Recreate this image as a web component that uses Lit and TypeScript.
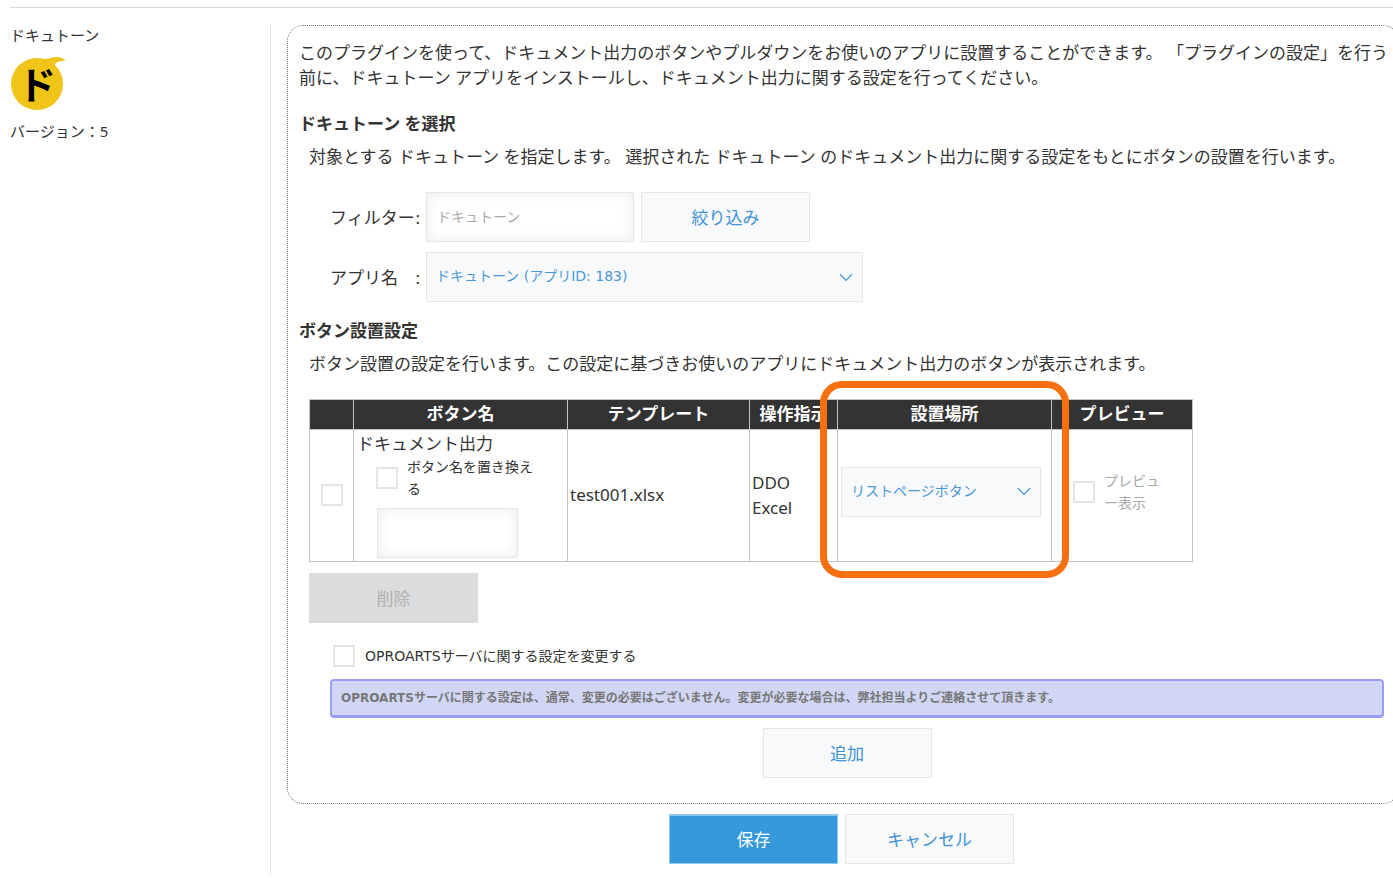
import { LitElement, html, css } from "lit";
import { customElement } from "lit/decorators.js";

const chevron = html`<svg class="chevron" viewBox="0 0 14 9" width="14" height="9" aria-hidden="true">
  <path d="M1 1.2 L7 7.4 L13 1.2" fill="none" stroke="#4a98dc" stroke-width="1.3" />
</svg>`;

@customElement("app-root")
export class AppRoot extends LitElement {
  static styles = css`
    :host {
      display: block;
      overflow: hidden;
      min-height: 100vh;
      background: #fff;
      color: #333;
      font-family: "Noto Sans", "Noto Sans CJK JP", sans-serif;
      font-size: 17px;
      line-height: 25px;
    }
    * {
      box-sizing: border-box;
    }
    input,
    select,
    button {
      margin: 0;
      font-family: inherit;
      border-radius: 0;
    }
    .page {
      margin: 7px 0 0 10px;
      padding-top: 16px;
      border-top: 1px solid #d8d9da;
      display: flex;
    }
    .side {
      flex: 0 0 261px;
      height: 851px;
      border-right: 1px solid #e3e7e8;
      font-size: 15px;
      line-height: 22px;
    }
    .side p {
      margin: 0;
    }
    .logo {
      display: block;
      margin: 8px 0 10px;
    }
    .logo text {
      font-weight: 700;
      font-size: 38px;
    }
    .main {
      flex: 1;
      min-width: 0;
      margin: 1px -6px 0 16px;
    }
    .panel {
      border: 1px dotted #777;
      border-radius: 16px;
      padding: 14px 3px 25px 11px;
    }
    p {
      margin: 0;
    }
    .intro {
      white-space: nowrap;
    }
    h2 {
      margin: 21px 0 0;
      font-size: 17px;
      line-height: 25px;
      font-weight: 700;
    }
    .form + h2 {
      margin-top: 16px;
    }
    .desc {
      margin: 8px 0 0 10px;
    }
    .form {
      margin: 23px 0 0 31px;
      display: grid;
      grid-template-columns: 90px max-content;
      gap: 10px 6px;
      align-items: center;
    }
    .form label {
      display: flex;
      justify-content: space-between;
    }
    .line {
      display: flex;
      gap: 7px;
    }
    .text {
      height: 50px;
      padding: 0 10px 2px;
      border: 1px solid #e3e7e8;
      background: #fff;
      box-shadow: inset 0 0 12px 2px #f0f0f0;
      font-size: 14px;
    }
    .text::placeholder {
      color: #aaa;
      opacity: 1;
    }
    .filter {
      width: 208px;
    }
    .btn {
      width: 169px;
      height: 50px;
      padding: 0 0 2px;
      border: 1px solid #e3e7e8;
      background: #f7f9fa;
      color: #4092d8;
      font-size: 17px;
    }
    .drop {
      display: grid;
      align-items: center;
    }
    .drop > * {
      grid-area: 1 / 1;
    }
    .drop select {
      appearance: none;
      width: 100%;
      height: 50px;
      padding: 0 30px 2px 9px;
      border: 1px solid #e3e7e8;
      background: #f7f9fa;
      color: #4a98dc;
      font-family: "DejaVu Sans", "Noto Sans CJK JP", sans-serif;
      font-size: 14px;
    }
    .chevron {
      justify-self: end;
      margin-right: 10px;
      pointer-events: none;
    }
    .app-drop {
      width: 437px;
    }
    .table-wrap {
      position: relative;
      width: 884px;
      margin: 23px 0 0 10px;
    }
    table {
      width: 100%;
      table-layout: fixed;
      border-collapse: collapse;
    }
    th,
    td {
      border: 1px solid #c4c4c4;
    }
    th {
      height: 30px;
      padding: 0 0 2px;
      background: #333;
      color: #fff;
      white-space: nowrap;
      line-height: 25px;
    }
    td {
      height: 132px;
      padding: 2px 2px 4px;
      vertical-align: middle;
    }
    .raised {
      padding-bottom: 10px;
    }
    .c-check {
      width: 44px;
    }
    .c-name {
      width: 214px;
    }
    .c-tmpl {
      width: 182px;
    }
    .c-op {
      width: 88px;
    }
    .c-place {
      width: 214px;
    }
    .ring {
      position: absolute;
      left: 511px;
      top: -18px;
      bottom: -16px;
      width: 249px;
      border: 7px solid #f7700f;
      border-radius: 22px;
      pointer-events: none;
    }
    .box {
      appearance: none;
      flex: none;
      display: block;
      width: 22px;
      height: 22px;
      border: 2px solid #e3e5e6;
      background: #fff;
    }
    .only {
      margin: 0 auto;
    }
    .check {
      display: flex;
      align-items: center;
      gap: 9px;
      font-family: "DejaVu Sans", "Noto Sans CJK JP", sans-serif;
      font-size: 14px;
      line-height: 22px;
    }
    .rename {
      margin-left: 19px;
      width: 164px;
    }
    .name-cell {
      vertical-align: top;
      padding: 1px 3px;
    }
    .new-name {
      display: block;
      width: 141px;
      margin: 8px 0 0 20px;
    }
    .place-drop {
      width: 200px;
      margin-left: 1px;
    }
    .preview {
      margin-left: 19px;
      width: 92px;
      color: #aaa;
      line-break: anywhere;
    }
    .delete {
      display: block;
      margin: 11px 0 0 10px;
      background: #dbdcdd;
      border-color: #dbdcdd;
      color: #b0b0b0;
    }
    .server {
      margin: 22px 0 0 34px;
      gap: 10px;
      width: max-content;
    }
    .notice {
      margin: 12px 11px 0 31px;
      padding: 6px 9px;
      border: 2px solid #9a9df6;
      border-bottom-width: 3px;
      border-radius: 4px;
      background: #d0d6f4;
      color: #777;
      font-family: "DejaVu Sans", "Noto Sans CJK JP", sans-serif;
      font-size: 12px;
      line-height: 22px;
      font-weight: 700;
    }
    .add {
      display: block;
      margin: 10px auto 0;
    }
    .actions {
      display: flex;
      justify-content: center;
      gap: 7px;
      margin-top: 10px;
      padding-right: 3px;
    }
    .save {
      background: #3498db;
      border-color: #8cc8ec;
      border-top-width: 2px;
      color: #fff;
    }
  `;

  render() {
    return html`
      <div class="page">
        <aside class="side">
          <p>ドキュトーン</p>
          <svg class="logo" width="56" height="56" viewBox="0 0 56 56" role="img" aria-label="ドキュトーン">
            <circle cx="27" cy="30" r="26" fill="#f0c419" />
            <path d="M30 5 C38 6 41 3 46 3 C51 3 54 5 56 7 C52 6.500 49 7 46 9 L42 14 L30 10 Z" fill="#f0c419" />
            <text x="8" y="45" fill="#000">ド</text>
          </svg>
          <p>バージョン：5</p>
        </aside>
        <main class="main">
          <section class="panel">
            <p class="intro">
              このプラグインを使って、ドキュメント出力のボタンやプルダウンをお使いのアプリに設置することができます。 「プラグインの設定」を行う<br />前に、ドキュトーン アプリをインストールし、ドキュメント出力に関する設定を行ってください。
            </p>
            <h2>ドキュトーン を選択</h2>
            <p class="desc">
              対象とする ドキュトーン を指定します。 選択された ドキュトーン のドキュメント出力に関する設定をもとにボタンの設置を行います。
            </p>
            <div class="form">
              <label for="filter"><span>フィルター</span><span>:</span></label>
              <div class="line">
                <input id="filter" class="text filter" type="text" placeholder="ドキュトーン" />
                <button class="btn" type="button">絞り込み</button>
              </div>
              <label for="app"><span>アプリ名</span><span>:</span></label>
              <div class="drop app-drop">
                <select id="app"><option>ドキュトーン (アプリID: 183)</option></select>
                ${chevron}
              </div>
            </div>
            <h2>ボタン設置設定</h2>
            <p class="desc">
              ボタン設置の設定を行います。この設定に基づきお使いのアプリにドキュメント出力のボタンが表示されます。
            </p>
            <div class="table-wrap">
              <table>
                <thead>
                  <tr>
                    <th class="c-check"></th>
                    <th class="c-name">ボタン名</th>
                    <th class="c-tmpl">テンプレート</th>
                    <th class="c-op">操作指示</th>
                    <th class="c-place">設置場所</th>
                    <th>プレビュー</th>
                  </tr>
                </thead>
                <tbody>
                  <tr>
                    <td><input class="box only" type="checkbox" aria-label="行を選択" /></td>
                    <td class="name-cell">
                      <div>ドキュメント出力</div>
                      <label class="check rename">
                        <input class="box" type="checkbox" /><span>ボタン名を置き換える</span>
                      </label>
                      <input class="text new-name" type="text" aria-label="ボタン名" />
                    </td>
                    <td>test001.xlsx</td>
                    <td>DDO<br />Excel</td>
                    <td class="raised">
                      <div class="drop place-drop">
                        <select aria-label="設置場所"><option>リストページボタン</option></select>
                        ${chevron}
                      </div>
                    </td>
                    <td class="raised">
                      <label class="check preview">
                        <input class="box" type="checkbox" disabled /><span>プレビュー表示</span>
                      </label>
                    </td>
                  </tr>
                </tbody>
              </table>
              <div class="ring"></div>
            </div>
            <button class="btn delete" type="button" disabled>削除</button>
            <label class="check server">
              <input class="box" type="checkbox" /><span>OPROARTSサーバに関する設定を変更する</span>
            </label>
            <p class="notice">
              OPROARTSサーバに関する設定は、通常、変更の必要はございません。変更が必要な場合は、弊社担当よりご連絡させて頂きます。
            </p>
            <button class="btn add" type="button">追加</button>
          </section>
          <div class="actions">
            <button class="btn save" type="button">保存</button>
            <button class="btn" type="button">キャンセル</button>
          </div>
        </main>
      </div>
    `;
  }
}
